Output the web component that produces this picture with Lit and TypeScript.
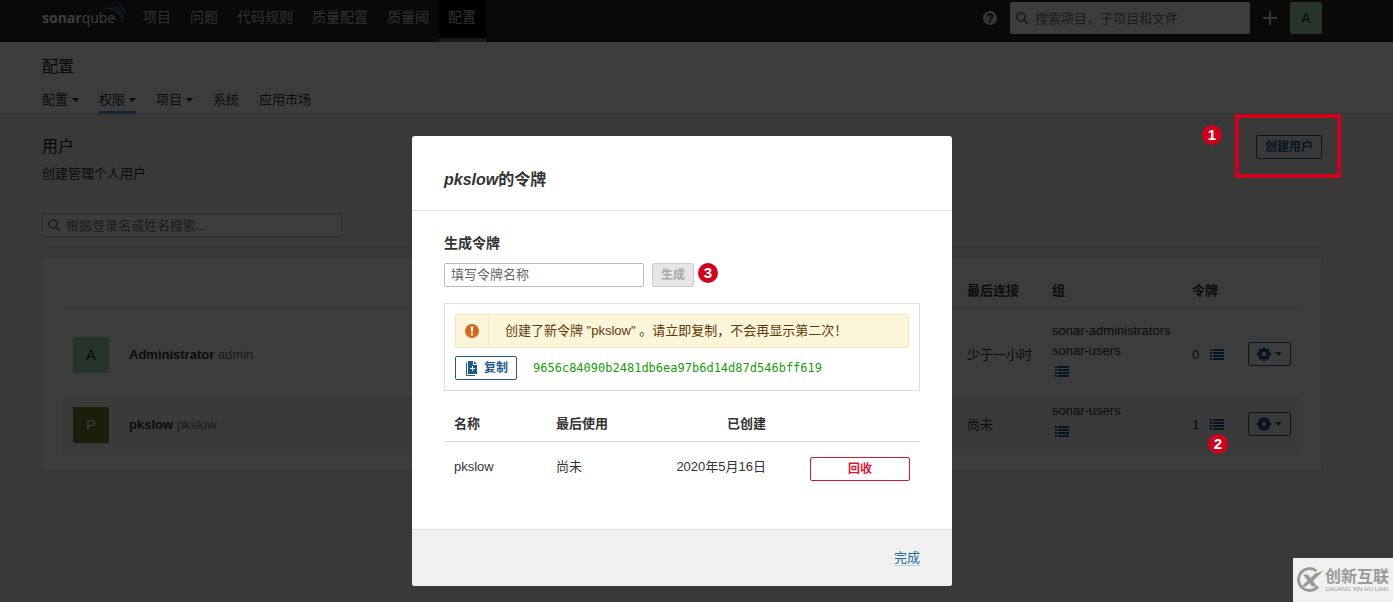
import { LitElement, html, css, svg, nothing } from "lit";
import { customElement, property } from "lit/decorators.js";

const caret = html`<svg class="caret" width="7" height="4" viewBox="0 0 7 4" aria-hidden="true">
  <path d="M0 0h7L3.5 4z" fill="currentColor" />
</svg>`;

const magnifier = html`<svg class="magnifier" width="12" height="12" viewBox="0 0 12 12" aria-hidden="true">
  <circle cx="5" cy="5" r="4" fill="none" stroke="currentColor" stroke-width="1.9" />
  <path d="M8 8l3 3" stroke="currentColor" stroke-width="2.2" stroke-linecap="round" />
</svg>`;

const listIcon = html`<svg width="14" height="11" viewBox="0 0 14 11" aria-hidden="true">
  <path
    fill="currentColor"
    d="M0 0h2v2H0zM3 0h11v2H3zM0 3h2v2H0zM3 3h11v2H3zM0 6h2v2H0zM3 6h11v2H3zM0 9h2v2H0zM3 9h11v2H3z"
  />
</svg>`;

const gearIcon = html`<svg width="14" height="14" viewBox="0 0 14 14" aria-hidden="true">
  <circle cx="7" cy="7" r="3.7" fill="none" stroke="currentColor" stroke-width="3" />
  ${[0, 45, 90, 135].map(
    (angle) => svg`<path d="M5.6 0h2.8l.3 2.6H5.3zM5.6 14h2.8l.3-2.6H5.3z" fill="currentColor" transform="rotate(${angle} 7 7)" />`
  )}
</svg>`;

interface User {
  initial: string;
  tone: string;
  name: string;
  login: string;
  lastSeen: string;
  groups: string[];
  tokens: number;
}

const users: User[] = [
  { initial: "A", tone: "green", name: "Administrator", login: "admin", lastSeen: "少于一小时", groups: ["sonar-administrators", "sonar-users"], tokens: 0 },
  { initial: "P", tone: "olive", name: "pkslow", login: "pkslow", lastSeen: "尚未", groups: ["sonar-users"], tokens: 1 },
];

const base = css`
  * {
    box-sizing: border-box;
  }
  a {
    color: inherit;
    text-decoration: none;
  }
  h1,
  h2,
  h3,
  p,
  ul {
    margin: 0;
    padding: 0;
    list-style: none;
  }
  button,
  input {
    font-family: inherit;
    margin: 0;
  }
  .btn {
    display: inline-flex;
    align-items: center;
    height: 24px;
    padding: 0 8px;
    border: 1px solid #1f5a8c;
    border-radius: 2px;
    background: transparent;
    color: #1f5a8c;
    font-size: 12px;
    font-weight: 700;
    line-height: 22px;
    white-space: nowrap;
  }
  .avatar {
    display: flex;
    align-items: center;
    justify-content: center;
    width: 36px;
    height: 36px;
    border-radius: 2px;
    font-size: 14px;
  }
  .green {
    background: #a5dcb1;
    color: #222;
  }
  .olive {
    background: #7c7c32;
    color: #fff;
  }
  table {
    width: 100%;
    border-collapse: collapse;
    table-layout: fixed;
  }
  th {
    text-align: left;
    font-weight: 700;
  }
`;

@customElement("step-badge")
export class StepBadge extends LitElement {
  @property() label = "";
  static styles = css`
    :host {
      display: inline-flex;
      align-items: center;
      justify-content: center;
      width: 20px;
      height: 20px;
      border-radius: 50%;
      background: #d0021b;
      color: #fff;
      font: 700 15px/20px "Liberation Sans", sans-serif;
    }
  `;
  render() {
    return html`${this.label}`;
  }
}

@customElement("top-nav")
export class TopNav extends LitElement {
  static styles = [
    base,
    css`
      :host {
        display: block;
        background: #262626;
      }
      .bar {
        display: flex;
        height: 42px;
        padding: 0 71px 0 42px;
      }
      .logo {
        display: flex;
        height: 36px;
        width: 92px;
        color: #fff;
      }
      .links {
        display: flex;
        flex: 1;
      }
      .links a {
        height: 42px;
        padding: 0 10px 0 9px;
        font-size: 14px;
        line-height: 35px;
        color: #ccc;
        white-space: nowrap;
      }
      .links .active {
        background: #000;
        border-bottom: 4px solid #6c6c6c;
      }
      .tools {
        display: flex;
        align-items: center;
        height: 36px;
        gap: 13px;
        color: #fff;
      }
      .tools button {
        display: flex;
        padding: 0;
        border: 0;
        background: none;
        color: #ddd;
      }
      .search {
        display: flex;
        align-items: center;
        gap: 7px;
        width: 240px;
        height: 32px;
        padding: 0 6px;
        border-radius: 2px;
        background: #fff;
        color: #888;
      }
      .search input {
        flex: 1;
        min-width: 0;
        padding: 0;
        border: 0;
        background: none;
        font-size: 13px;
        color: #444;
      }
      .search input::placeholder {
        color: #777;
        opacity: 1;
      }
      .avatar {
        width: 32px;
        height: 32px;
      }
    `,
  ];
  render() {
    const links = ["项目", "问题", "代码规则", "质量配置", "质量阈", "配置"];
    return html`<nav class="bar">
      <a class="logo" href="#" aria-label="sonarqube">
        <svg width="86" height="36" viewBox="0 0 86 36" aria-hidden="true">
          <text x="0" y="23" fill="#fff" font-family="Open Sans" font-size="14" font-weight="700">sonar<tspan font-weight="400">qube</tspan></text>
          <g fill="none" stroke="#4b9fd5" stroke-width="1.2">
            <path d="M64 8c9 0 16 6 17 15" />
            <path d="M71 6.500c5 2 9 6 11 11" />
            <path d="M77 6c3 1.500 5 4 6.500 7" />
          </g>
        </svg>
      </a>
      <div class="links">
        ${links.map((label) => html`<a href="#" class=${label === "配置" ? "active" : ""}>${label}</a>`)}
      </div>
      <div class="tools">
        <button aria-label="帮助">
          <svg width="14" height="14" viewBox="0 0 14 14">
            <circle cx="7" cy="7" r="7" fill="currentColor" />
            <path d="M4.700 5.400C4.800 2.500 9.400 2.500 9.400 5.200 9.400 6.900 7 6.900 7 8.600" fill="none" stroke="#262626" stroke-width="1.900" />
            <path d="M6 9.600h2v1.900H6z" fill="#262626" />
          </svg>
        </button>
        <div class="search">${magnifier}<input type="text" aria-label="搜索" placeholder="搜索项目，子项目和文件" /></div>
        <button aria-label="新建">
          <svg width="14" height="14" viewBox="0 0 14 14"><path d="M0 6h6V0h2v6h6v2H8v6H6V8H0z" fill="currentColor" /></svg>
        </button>
        <span class="avatar green">A</span>
      </div>
    </nav>`;
  }
}

@customElement("users-page")
export class UsersPage extends LitElement {
  static styles = [
    base,
    css`
      :host {
        display: block;
      }
      .context {
        padding: 13px 71px 0 42px;
        border-bottom: 1px solid #e6e6e6;
        background: #fff;
      }
      h1,
      h2 {
        font-size: 16px;
        font-weight: 400;
        line-height: 24px;
        color: #222;
      }
      .tabs {
        display: flex;
        gap: 20px;
        margin-top: 8px;
      }
      .tabs a {
        display: flex;
        align-items: center;
        gap: 4px;
        height: 27px;
        padding-top: 1px;
        border-bottom: 3px solid transparent;
        line-height: 20px;
        color: #333;
        margin-bottom: -1px;
      }
      .tabs .active {
        border-color: #4b9fd5;
      }
      .content {
        padding: 21px 71px 20px 42px;
      }
      .head {
        display: flex;
        justify-content: space-between;
        align-items: flex-start;
      }
      .head p {
        margin-top: 5px;
      }
      .filter {
        display: flex;
        align-items: center;
        gap: 6px;
        width: 300px;
        height: 24px;
        margin: 29px 0 10px;
        padding: 0 6px 0 5px;
        border: 1px solid #bbb;
        border-radius: 2px;
        background: #fff;
        color: #888;
      }
      .filter input {
        flex: 1;
        min-width: 0;
        padding: 0;
        border: 0;
        background: none;
        font-size: 13px;
      }
      .filter input::placeholder {
        color: #777;
        opacity: 1;
      }
      .panel {
        margin-top: 8px;
        padding: 20px 20px 16px;
        border: 1px solid #e6e6e6;
        background: #fff;
      }
      .rule {
        height: 1px;
        background: #e6e6e6;
      }
      .c-avatar {
        width: 56px;
      }
      .c-seen {
        width: 85px;
      }
      .c-groups {
        width: 140px;
      }
      .c-tokens {
        width: 56px;
      }
      .c-actions {
        width: 63px;
      }
      th {
        height: 30px;
        padding: 4px 10px 6px;
        border-bottom: 1px solid #ddd;
        line-height: 20px;
        white-space: nowrap;
      }
      .spacer td {
        height: 7px;
        padding: 0;
      }
      td {
        padding: 0 0 0 10px;
        line-height: 20px;
        white-space: nowrap;
      }
      tr.even {
        background: #f5f5f5;
      }
      td.groups {
        padding: 6px 0 14px 10px;
      }
      .login {
        color: #777;
      }
      .icon-btn {
        display: flex;
        align-items: center;
        height: 20px;
        padding: 0 3px;
        border: 0;
        background: none;
        color: #1f5a8c;
      }
      .groups .icon-btn {
        height: 22px;
        margin-bottom: -2px;
      }
      .tokens {
        display: flex;
        align-items: center;
        gap: 8px;
      }
      .gear {
        gap: 4px;
      }
    `,
  ];
  render() {
    const tabs = [
      ["配置", true],
      ["权限", true],
      ["项目", true],
      ["系统", false],
      ["应用市场", false],
    ] as const;
    return html`
      <header class="context">
        <h1>配置</h1>
        <nav class="tabs">
          ${tabs.map(([label, menu]) => html`<a href="#" class=${label === "权限" ? "active" : ""}>${label}${menu ? caret : nothing}</a>`)}
        </nav>
      </header>
      <main class="content">
        <div class="head">
          <div>
            <h2>用户</h2>
            <p>创建管理个人用户</p>
          </div>
          <button class="btn">创建用户</button>
        </div>
        <div class="filter">${magnifier}<input type="text" aria-label="搜索用户" placeholder="根据登录名或姓名搜索..." /></div>
        <div class="rule"></div>
        <div class="panel">
          <table>
            <colgroup>
              <col class="c-avatar" />
              <col />
              <col class="c-seen" />
              <col class="c-groups" />
              <col class="c-tokens" />
              <col class="c-actions" />
            </colgroup>
            <thead>
              <tr>
                <th></th>
                <th></th>
                <th>最后连接</th>
                <th>组</th>
                <th>令牌</th>
                <th></th>
              </tr>
            </thead>
            <tbody>
              <tr class="spacer"><td colspan="6"></td></tr>
              ${users.map(
                (u, i) => html`<tr class=${i % 2 ? "even" : ""}>
                  <td><span class="avatar ${u.tone}">${u.initial}</span></td>
                  <td><strong>${u.name}</strong> <span class="login">${u.login}</span></td>
                  <td>${u.lastSeen}</td>
                  <td class="groups">
                    <ul>
                      ${u.groups.map((g) => html`<li>${g}</li>`)}
                      <li><button class="icon-btn" aria-label="更新组">${listIcon}</button></li>
                    </ul>
                  </td>
                  <td><span class="tokens">${u.tokens}<button class="icon-btn" aria-label="更新令牌">${listIcon}</button></span></td>
                  <td><button class="btn gear" aria-label="操作">${gearIcon}${caret}</button></td>
                </tr>`
              )}
            </tbody>
          </table>
        </div>
      </main>
    `;
  }
}

@customElement("tokens-modal")
export class TokensModal extends LitElement {
  static styles = [
    base,
    css`
      :host {
        display: block;
        width: 540px;
        border-radius: 3px;
        background: #fff;
        overflow: hidden;
      }
      header {
        padding: 32px 32px 18px;
        border-bottom: 1px solid #ddd;
      }
      h2 {
        font-size: 16px;
        line-height: 24px;
      }
      .body {
        padding: 20px 32px 32px;
      }
      h3 {
        margin-bottom: 8px;
        font-size: 14px;
        line-height: 24px;
      }
      .form {
        display: flex;
        align-items: flex-start;
      }
      .form input {
        width: 200px;
        height: 24px;
        margin-right: 8px;
        padding: 0 6px 2px;
        border: 1px solid #bbb;
        border-radius: 2px;
        font-size: 13px;
        color: #333;
      }
      .form input::placeholder {
        color: #666;
        opacity: 1;
      }
      .btn:disabled {
        border-color: #ccc;
        background: #e6e6e6;
        color: #aaa;
      }
      step-badge {
        margin-left: 4px;
      }
      .created {
        margin: 16px 0;
        padding: 10px;
        border: 1px solid #ddd;
      }
      .alert {
        display: flex;
        height: 34px;
        margin-bottom: 8px;
        border: 1px solid #f8e6ba;
        border-radius: 2px;
        background: #fbf5da;
        color: #5f3a06;
        line-height: 32px;
      }
      .sign {
        display: flex;
        align-items: center;
        justify-content: center;
        width: 33px;
        border-right: 1px solid #f8e6ba;
      }
      .alert p {
        padding-left: 16px;
      }
      .row {
        display: flex;
        align-items: center;
        gap: 16px;
      }
      .copy {
        gap: 6px;
        padding: 0 8px 0 10px;
      }
      code {
        font: 12px/20px "DejaVu Sans Mono", monospace;
        color: #1a9c0a;
      }
      .c-name {
        width: 102px;
      }
      .c-used {
        width: 100px;
      }
      .c-revoke {
        width: 144px;
      }
      th {
        height: 34px;
        padding: 1px 10px 0;
        border-bottom: 1px solid #ddd;
      }
      td {
        padding: 15px 10px 16px;
        line-height: 20px;
        vertical-align: top;
      }
      .right {
        text-align: right;
      }
      .revoke {
        width: 100px;
        justify-content: center;
        border-color: #d4183a;
        color: #d4183a;
      }
      .revoke-cell {
        display: flex;
        justify-content: flex-end;
      }
      footer {
        padding: 18px 32px;
        border-top: 1px solid #ddd;
        background: #f0f0f0;
        text-align: right;
        line-height: 20px;
      }
      footer a {
        color: #236a97;
        border-bottom: 1px solid #b5d4e8;
      }
    `,
  ];
  render() {
    return html`
      <header><h2><em>pkslow</em>的令牌</h2></header>
      <div class="body">
        <h3>生成令牌</h3>
        <div class="form">
          <input type="text" aria-label="令牌名称" placeholder="填写令牌名称" />
          <button class="btn" disabled>生成</button>
          <step-badge label="3"></step-badge>
        </div>
        <div class="created">
          <div class="alert" role="alert">
            <span class="sign">
              <svg width="14" height="14" viewBox="0 0 14 14" aria-hidden="true">
                <circle cx="7" cy="7" r="7" fill="#d2691e" />
                <path d="M5.800 2.300h2.400l-.3 5.900H6.100zM5.900 9.300h2.200v2.200H5.900z" fill="#fcf6dc" />
              </svg>
            </span>
            <p>创建了新令牌 "pkslow" 。请立即复制，不会再显示第二次！</p>
          </div>
          <div class="row">
            <button class="btn copy">
              <svg width="12" height="16" viewBox="0 0 12 16" aria-hidden="true">
                <path d="M2 1h5v4h4v9H2zM8 1l3 3H8z" fill="currentColor" />
                <path d="M.5 2.500v13H9" fill="none" stroke="currentColor" />
                <path d="M4 8.500h5M6.500 6v5" stroke="#fff" />
              </svg>
              复制
            </button>
            <code>9656c84090b2481db6ea97b6d14d87d546bff619</code>
          </div>
        </div>
        <table>
          <colgroup>
            <col class="c-name" />
            <col class="c-used" />
            <col />
            <col class="c-revoke" />
          </colgroup>
          <thead>
            <tr>
              <th>名称</th>
              <th>最后使用</th>
              <th class="right">已创建</th>
              <th></th>
            </tr>
          </thead>
          <tbody>
            <tr>
              <td>pkslow</td>
              <td>尚未</td>
              <td class="right">2020年5月16日</td>
              <td>
                <div class="revoke-cell"><button class="btn revoke">回收</button></div>
              </td>
            </tr>
          </tbody>
        </table>
      </div>
      <footer><a href="#">完成</a></footer>
    `;
  }
}

@customElement("app-root")
export class AppRoot extends LitElement {
  static styles = css`
    :host {
      display: block;
      position: relative;
      min-height: 100vh;
      overflow: hidden;
      background: #f3f3f3;
      color: #333;
      font: 13px/20px "Liberation Sans", "Noto Sans CJK SC", sans-serif;
    }
    * {
      box-sizing: border-box;
    }
    .overlay {
      position: absolute;
      inset: 0;
      display: flex;
      justify-content: center;
      align-items: flex-start;
      padding: 136px 29px 16px 0;
      background: rgba(0, 0, 0, 0.765);
    }
    .frame {
      position: absolute;
      top: 114px;
      right: 52px;
      width: 106px;
      height: 64px;
      border: 4px solid #d0021b;
    }
    .step-1 {
      position: absolute;
      top: 125px;
      right: 171px;
    }
    .step-2 {
      position: absolute;
      top: 434px;
      right: 165px;
    }
    .watermark {
      position: absolute;
      right: 0;
      bottom: 0;
      display: flex;
      align-items: center;
      gap: 2px;
      width: 100px;
      height: 44px;
      padding-left: 3px;
      background: #f0f0f0;
      color: #999;
      white-space: nowrap;
    }
    .brand {
      display: flex;
      flex-direction: column;
    }
    .brand b {
      font-size: 16px;
      line-height: 18px;
    }
    .brand small {
      font-size: 6px;
      line-height: 7px;
    }
  `;
  render() {
    return html`
      <top-nav></top-nav>
      <users-page></users-page>
      <div class="overlay"><tokens-modal role="dialog" aria-modal="true"></tokens-modal></div>
      <div class="frame"></div>
      <step-badge class="step-1" label="1"></step-badge>
      <step-badge class="step-2" label="2"></step-badge>
      <div class="watermark">
        <svg width="27" height="26" viewBox="0 0 27 26" aria-hidden="true">
          <path d="M20.500 4A11 11 0 1 0 22 19.500" fill="none" stroke="#999" stroke-width="2.800" />
          <path d="M7 7.500h5l2.500 3.500L19 6.500l8-2.500-8.500 8.500-1.500 1.500 4 5.500h-5l-2.500-3.500-3.500 3.500H5.500l6-6z" fill="#999" />
        </svg>
        <span class="brand"><b>创新互联</b><small>CHUANG XIN HU LIAN</small></span>
      </div>
    `;
  }
}
